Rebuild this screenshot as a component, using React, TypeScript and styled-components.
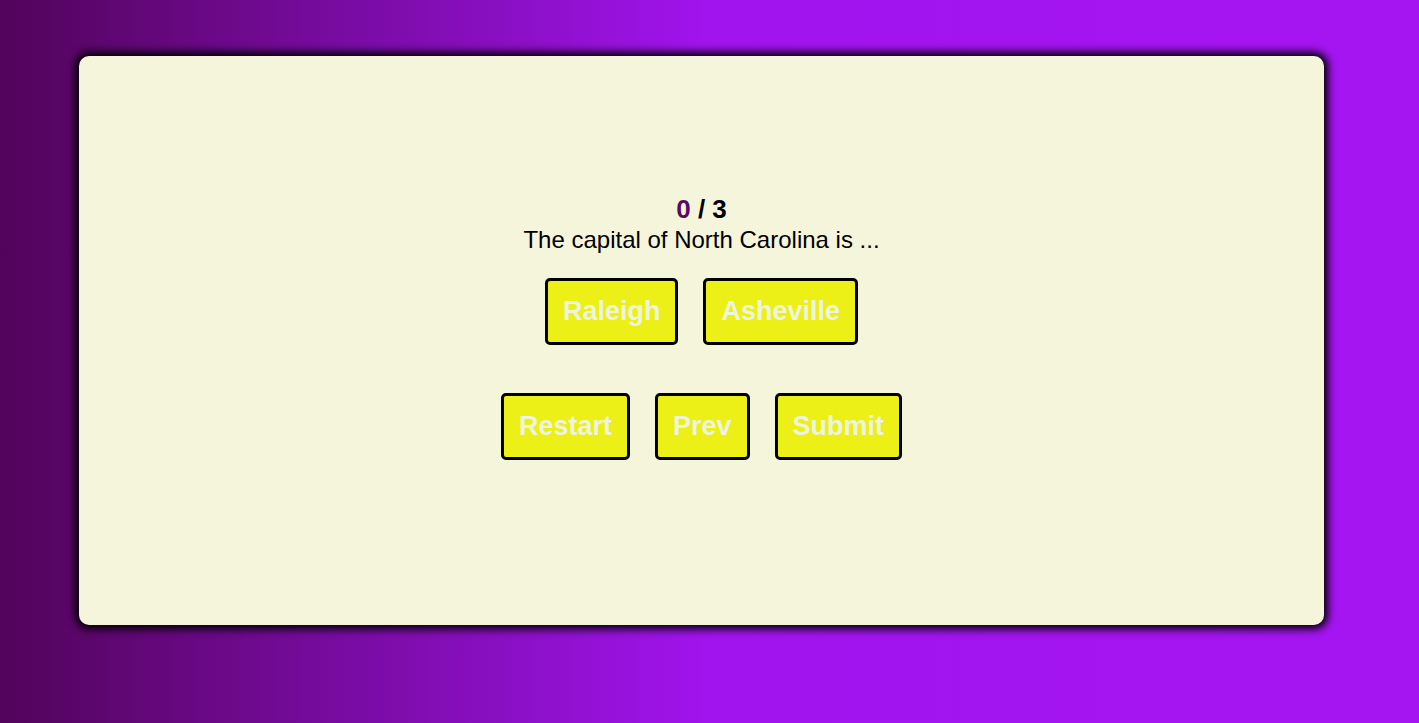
import React from "react";
import styled, { createGlobalStyle } from "styled-components";

const Global = createGlobalStyle`
  html, body { margin: 0; padding: 0; }
  body {
    min-height: 723px;
    background: linear-gradient(to right, #52045a 0%, #a114ee 50%, #a515f2 100%);
    font-family: "Liberation Sans", Arial, sans-serif;
  }
`;

const Page = styled.div`
  padding: 56px 95px 0 79px;
  height: 723px;
  box-sizing: border-box;
`;

const Card = styled.div`
  height: 569px;
  background: #f5f5dc;
  border-radius: 10px;
  box-shadow: 0 0 9px 4px #000;
  display: flex;
  flex-direction: column;
  align-items: center;
  padding-top: 138px;
  box-sizing: border-box;
`;

const Score = styled.div`
  font-size: 26px;
  font-weight: bold;
  color: #000;
  line-height: 30px;
`;

const Correct = styled.span`
  color: #5a0a62;
`;

const Question = styled.div`
  font-size: 24px;
  line-height: 28px;
  margin-top: 2px;
  color: #000;
`;

const Row = styled.div<{ $mt: number }>`
  display: flex;
  gap: 25px;
  margin-top: ${(p) => p.$mt}px;
`;

const Button = styled.button`
  font-family: "Liberation Sans", Arial, sans-serif;
  font-size: 27px;
  font-weight: bold;
  line-height: 31px;
  color: #eef4dd;
  background: #ecf016;
  border: 3px solid #000;
  border-radius: 5px;
  padding: 15px 15px;
  cursor: pointer;
`;

export default function App() {
  return (
    <>
      <Global />
      <Page>
        <Card>
          <Score>
            <Correct>0</Correct> / 3
          </Score>
          <Question>The capital of North Carolina is ...</Question>
          <Row $mt={24}>
            <Button>Raleigh</Button>
            <Button>Asheville</Button>
          </Row>
          <Row $mt={48}>
            <Button>Restart</Button>
            <Button>Prev</Button>
            <Button>Submit</Button>
          </Row>
        </Card>
      </Page>
    </>
  );
}
